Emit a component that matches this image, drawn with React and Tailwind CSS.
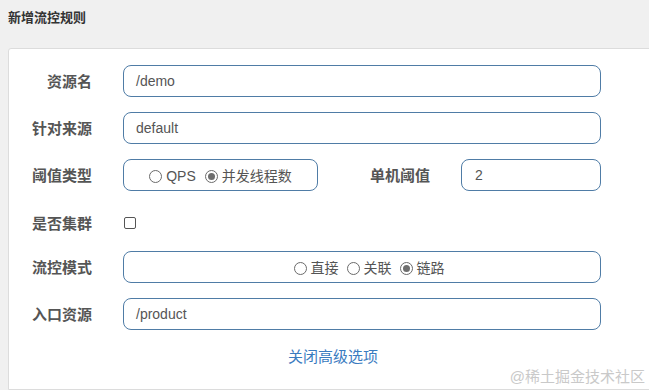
import React from 'react';

const cjk = { fontFamily: '"Liberation Sans", "Noto Sans CJK SC", sans-serif' };

function Radio({ checked, label }) {
  return (
    <label className="flex items-center gap-[4px] whitespace-nowrap">
      <span className="w-[13px] h-[13px] rounded-full border border-[#6b6b6b] bg-white flex items-center justify-center">
        {checked && <span className="w-[7px] h-[7px] rounded-full bg-[#6e6e6e]" />}
      </span>
      <span>{label}</span>
    </label>
  );
}

function Row({ label, children, className = '' }) {
  return (
    <div className={`flex items-center ${className}`}>
      <div className="w-[83px] pt-[3px] text-right text-[15px] font-bold text-[#555] shrink-0 whitespace-nowrap">{label}</div>
      <div className="ml-[31px] flex-1 flex items-center">{children}</div>
    </div>
  );
}

const box = 'h-[32px] border border-[#4f7ca6] rounded-[8px] bg-white flex items-center text-[14px] text-[#555]';

export default function App() {
  return (
    <div className="w-[649px] h-[390px] bg-[#f0f0f0] overflow-hidden relative" style={cjk}>
      <div className="h-[48px] pl-[8px] pt-[8px] text-[13px] font-bold text-[#333]">新增流控规则</div>
      <div className="ml-[8px] w-[660px] h-[342px] bg-white border border-[#dcdcdc] rounded-tl-[3px] pt-[16px]">
        <div className="w-[592px] flex flex-col">
          <Row label="资源名" className="h-[32px]">
            <div className={`${box} flex-1 px-[12px]`}>/demo</div>
          </Row>
          <Row label="针对来源" className="h-[32px] mt-[15px]">
            <div className={`${box} flex-1 px-[12px]`}>default</div>
          </Row>
          <Row label="阈值类型" className="h-[32px] mt-[15px]">
            <div className={`${box} w-[195px] shrink-0 justify-center gap-[9px] pt-[2px]`}>
              <Radio label="QPS" />
              <Radio checked label="并发线程数" />
            </div>
            <div className="ml-[52px] pt-[3px] shrink-0 whitespace-nowrap text-[15px] font-bold text-[#555]">单机阈值</div>
            <div className={`${box} ml-[31px] w-[140px] shrink-0 px-[13px]`}>2</div>
          </Row>
          <Row label="是否集群" className="h-[32px] mt-[16px]">
            <span className="w-[12px] h-[12px] border border-[#555] rounded-[2px] bg-white ml-[1px]" />
          </Row>
          <Row label="流控模式" className="h-[32px] mt-[12px]">
            <div className={`${box} flex-1 justify-center gap-[8px] pl-[14px] pt-[2px]`}>
              <Radio label="直接" />
              <Radio label="关联" />
              <Radio checked label="链路" />
            </div>
          </Row>
          <Row label="入口资源" className="h-[32px] mt-[15px]">
            <div className={`${box} flex-1 px-[12px]`}>/product</div>
          </Row>
          <div className="mt-[16px] pl-[56px] flex justify-center text-[15px] text-[#3a7bbf]">
            <span>关闭高级选项</span>
          </div>
        </div>
      </div>
      <div className="absolute right-[4px] bottom-[2px] text-[15px] text-[#c9c9c9]">@稀土掘金技术社区</div>
    </div>
  );
}
